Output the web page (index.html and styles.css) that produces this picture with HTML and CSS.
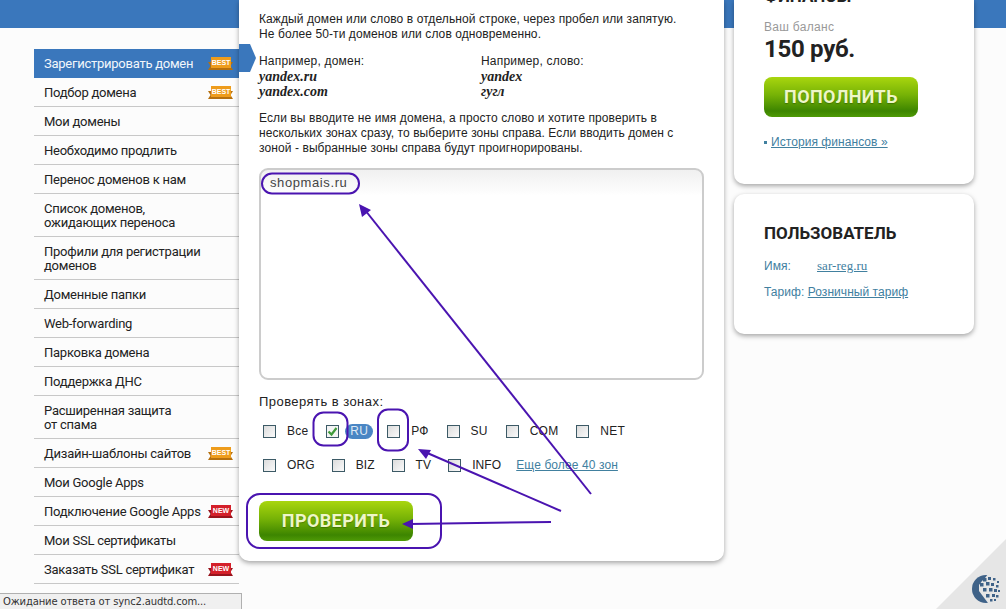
FILE: index.html
```html
<!DOCTYPE html>
<html>
<head>
<meta charset="utf-8">
<title>Регистрация доменов</title>
<link rel="stylesheet" href="styles.css">
</head>
<body>

<div class="page">
	<ul class="menu">
		<li class="active"><span>Зарегистрировать домен</span><b class="badge best">BEST</b></li>
		<li><span>Подбор домена</span><b class="badge best">BEST</b></li>
		<li><span>Мои домены</span></li>
		<li><span>Необходимо продлить</span></li>
		<li><span>Перенос доменов к нам</span></li>
		<li class="tall"><span>Список доменов,<br>ожидающих переноса</span></li>
		<li class="tall"><span>Профили для регистрации<br>доменов</span></li>
		<li><span>Доменные папки</span></li>
		<li><span>Web-forwarding</span></li>
		<li><span>Парковка домена</span></li>
		<li><span>Поддержка ДНС</span></li>
		<li class="tall"><span>Расширенная защита<br>от спама</span></li>
		<li><span>Дизайн-шаблоны сайтов</span><b class="badge best">BEST</b></li>
		<li><span>Мои Google Apps</span></li>
		<li><span>Подключение Google Apps</span><b class="badge new">NEW</b></li>
		<li><span>Мои SSL сертификаты</span></li>
		<li><span>Заказать SSL сертификат</span><b class="badge new">NEW</b></li>
	</ul>

	<div class="main">
		<p>Каждый домен или слово в отдельной строке, через пробел или запятую.<br>Не более 50-ти доменов или слов одновременно.</p>
		<div class="examples">
			<div>Например, домен:<em>yandex.ru</em><em>yandex.com</em></div>
			<div>Например, слово:<em>yandex</em><em>гугл</em></div>
		</div>
		<p>Если вы вводите не имя домена, а просто слово и хотите проверить в<br>нескольких зонах сразу, то выберите зоны справа. Если вводить домен с<br>зоной - выбранные зоны справа будут проигнорированы.</p>
		<div class="domains">shopmais.ru</div>
		<div class="zones-title">Проверять в зонах:</div>
		<div class="zones">
			<label><i class="cb"></i>Все</label>
			<label class="ru"><i class="cb checked"><svg width="11" height="11" viewBox="0 0 11 11"><path d="M1.5 5.5 L4.5 8.5 L9.5 2" fill="none" stroke="#3f9a3a" stroke-width="2.2"/></svg></i><span class="pill">RU</span></label>
			<label><i class="cb"></i>РФ</label>
			<label><i class="cb"></i>SU</label>
			<label><i class="cb"></i>COM</label>
			<label><i class="cb"></i>NET</label>
		</div>
		<div class="zones second">
			<label><i class="cb"></i>ORG</label>
			<label><i class="cb"></i>BIZ</label>
			<label><i class="cb"></i>TV</label>
			<label><i class="cb"></i>INFO</label>
			<a class="link more">Еще более 40 зон</a>
		</div>
		<div class="green-btn">ПРОВЕРИТЬ</div>
	</div>

	<div class="side">
		<div class="card finance">
			<h3>ФИНАНСЫ</h3>
			<div class="balance-label">Ваш баланс</div>
			<div class="balance">150 руб.</div>
			<div class="green-btn">ПОПОЛНИТЬ</div>
			<div class="history"><i class="bullet"></i><a class="link">История финансов »</a></div>
		</div>
		<div class="card user">
			<h3>ПОЛЬЗОВАТЕЛЬ</h3>
			<div class="user-row"><span class="user-key">Имя:</span><a class="link serif">sar-reg.ru</a></div>
			<div class="user-row tariff">Тариф: <a class="link">Розничный тариф</a></div>
		</div>
	</div>
</div>

<!-- пометки поверх скриншота -->
<svg class="marks" width="1006" height="609" viewBox="0 0 1006 609">
	<g fill="none" stroke="#4a14b0" stroke-width="2">
		<rect x="262" y="173.500" width="97" height="20" rx="10"/>
		<rect x="313.500" y="412.500" width="34" height="33" rx="10"/>
		<rect x="378" y="409.500" width="30" height="41" rx="10"/>
		<rect x="247" y="494" width="194" height="54" rx="13"/>
		<path d="M591 494 L365 210"/>
		<path d="M561 511 L425 452"/>
		<path d="M551 522 L410 524"/>
	</g>
	<g fill="#4a14b0">
		<path d="M359 204 L371 210 L362 217 Z"/>
		<path d="M418 449 L431 450 L426 459 Z"/>
		<path d="M402 524 L413 519 L413 529 Z"/>
	</g>
</svg>

<div class="corner">
	<svg width="70" height="70" viewBox="0 0 70 70">
		<path d="M70 0 L70 70 L0 70 Z" fill="#e6e6e6"/>
		<circle cx="50" cy="50" r="14" fill="#3f6288"/>
		<g fill="#e6e6e6">
			<path d="M52 35 h14 v29 h-14 l-3 -4 l-3 -4 l-3 -4 v-6 l3 -4 l3 -3 Z"/>
		</g>
		<g fill="#3f6288">
			<rect x="47" y="39" width="3.500" height="3.500"/><rect x="52" y="38" width="3" height="3"/><rect x="57" y="39" width="2.500" height="2.500"/><rect x="61" y="42" width="2" height="2"/>
			<rect x="44" y="44" width="3.500" height="3.500"/><rect x="50" y="43" width="3.500" height="3.500"/><rect x="55" y="44" width="3" height="3"/><rect x="60" y="46" width="2.500" height="2.500"/>
			<rect x="47" y="49" width="3.500" height="3.500"/><rect x="53" y="49" width="3.500" height="3.500"/><rect x="58" y="50" width="3" height="3"/><rect x="62" y="51" width="2" height="2"/>
			<rect x="50" y="55" width="3.500" height="3.500"/><rect x="56" y="55" width="3" height="3"/><rect x="60" y="56" width="2.500" height="2.500"/>
			<rect x="54" y="60" width="2.500" height="2.500"/><rect x="58" y="60" width="2" height="2"/>
		</g>
	</svg>
</div>

<div class="statusbar">Ожидание ответа от sync2.audtd.com...</div>

</body>
</html>
```

FILE: styles.css
```css
html, body {
	margin: 0;
	padding: 0;
	height: 609px;
	overflow: hidden;
}

body {
	position: relative;
	font-family: "Liberation Sans", Arial, sans-serif;
	font-size: 12px;
	color: #222;
}

.page {
	display: grid;
	grid-template-columns: 205px 485px 250px;
	height: 609px;
	padding-left: 34px;
	box-sizing: border-box;
	background: linear-gradient(#3a77bc 0, #3a77bc 28px, #fcfcfc 28px);
	align-items: start;
}

/* menu */
.menu {
	margin: 49px 0 0;
	padding: 0;
	list-style: none;
	font-family: Roboto, sans-serif;
	font-size: 13px;
	line-height: 14px;
	letter-spacing: -.25px;
	color: #222;
}

.menu li {
	position: relative;
	display: flex;
	justify-content: space-between;
	align-items: center;
	box-sizing: border-box;
	height: 29px;
	padding: 2px 8px 0 10px;
	border-bottom: 1px solid #c8c8c8;
}

.menu li.tall {
	height: 43px;
}

.menu li.active {
	background: #3a77bc;
	color: #f2f6fb;
	border-bottom-color: #3a77bc;
}

.menu li.active::after {
	content: "";
	position: absolute;
	left: 205px;
	top: -5px;
	width: 17px;
	height: 28px;
	background: #3a77bc;
	clip-path: polygon(0 0, 11px 0, 100% 50%, 11px 100%, 0 100%);
	z-index: 2;
}

/* ribbon: band over two darker tails */
.badge {
	position: relative;
	isolation: isolate;
	width: 20px;
	height: 11px;
	margin: -3px 0 0;
	font-family: "Liberation Sans", sans-serif;
	font-size: 7px;
	line-height: 11px;
	font-weight: bold;
	text-align: center;
	color: #fff;
	letter-spacing: 0;
}

.badge::before {
	content: "";
	position: absolute;
	left: -3px;
	right: -2px;
	top: 5px;
	height: 8px;
	z-index: -2;
	clip-path: polygon(0 0, 100% 0, 90% 50%, 100% 100%, 0 100%, 10% 50%);
}

.badge::after {
	content: "";
	position: absolute;
	left: 0;
	right: 0;
	top: 0;
	bottom: 0;
	z-index: -1;
}

.best::before { background: #b5700f; }
.best::after { background: #ee9c1c; }
.new::before { background: #98141c; }
.new::after { background: #d4202a; }

/* main */
.main {
	position: relative;
	z-index: 1;
	box-sizing: border-box;
	height: 561px;
	padding: 12px 20px 0;
	background: #fff;
	border-radius: 0 0 10px 10px;
	box-shadow: 0 2px 5px rgba(0, 0, 0, .35);
	line-height: 15px;
	letter-spacing: .09px;
}

.main p {
	margin: 0;
}

.examples {
	display: grid;
	grid-template-columns: 222px 1fr;
	margin: 12px 0;
	letter-spacing: .2px;
}

.examples em {
	display: block;
	font-family: "Liberation Serif", serif;
	font-weight: bold;
	font-size: 14px;
	letter-spacing: 0;
}

.domains {
	box-sizing: border-box;
	height: 212px;
	margin-top: 12px;
	padding: 5px 9px;
	border: 2px solid #ccc;
	border-radius: 9px;
	background: linear-gradient(#f0f0f0, #fff 26px);
	font-size: 13px;
	letter-spacing: .6px;
	color: #444;
}

.zones-title {
	margin-top: 14px;
	font-size: 13px;
	letter-spacing: .45px;
}

.zones {
	display: flex;
	align-items: center;
	column-gap: 18px;
	height: 20px;
	margin: 12px 0 0 4px;
	letter-spacing: .22px;
}

.zones.second {
	column-gap: 17px;
	margin-top: 14px;
	letter-spacing: .1px;
}

.zones .more {
	margin-left: -2px;
}

.zones label {
	display: flex;
	align-items: center;
}

.zones .ru {
	margin-right: -4px;
}

.cb {
	display: block;
	box-sizing: border-box;
	width: 13px;
	height: 13px;
	margin-right: 11px;
	border: 1px solid #3c5a66;
	background: linear-gradient(135deg, #dcdcdc, #fafafa);
}

.cb.checked {
	margin-right: 6px;
	background: #f4f4f4;
}

.cb svg {
	display: block;
}

.pill {
	padding: 0 5px;
	border-radius: 9px;
	background: #4a86c4;
	color: #dfe9f4;
}

.link {
	color: #41809f;
	text-decoration: underline;
}

.green-btn {
	width: 154px;
	height: 40px;
	border-radius: 8px;
	background: linear-gradient(#a9d60e 0, #76b206 45%, #3d8500 85%, #4f9a06 100%);
	font-family: Roboto, sans-serif;
	font-size: 18px;
	font-weight: bold;
	line-height: 40px;
	text-align: center;
	letter-spacing: .4px;
	color: #eef6c8;
	text-shadow: 0 1px 1px rgba(40, 80, 0, .5);
}

.main .green-btn {
	margin-top: 26px;
}

/* right column */
.side {
	margin-left: 10px;
	display: flex;
	flex-direction: column;
	gap: 10px;
}

.card {
	position: relative;
	box-sizing: border-box;
	padding: 0 30px;
	background: #fff;
	border-radius: 0 0 10px 10px;
	box-shadow: 0 2px 5px rgba(0, 0, 0, .35);
}

.card h3 {
	margin: 0;
	font-family: Roboto, sans-serif;
	font-size: 17px;
	line-height: 20px;
	color: #222;
}

.finance {
	height: 184px;
}

.finance h3 {
	margin-top: -14px;
}

.balance-label {
	margin-top: 14px;
	color: #999;
	line-height: 15px;
	letter-spacing: .3px;
}

.balance {
	font-family: Roboto, sans-serif;
	font-size: 24px;
	font-weight: bold;
	line-height: 28px;
	letter-spacing: -.3px;
}

.finance .green-btn {
	margin-top: 14px;
}

.history {
	display: flex;
	align-items: center;
	margin-top: 18px;
	line-height: 15px;
	letter-spacing: .06px;
}

.bullet {
	width: 3px;
	height: 3px;
	margin-right: 4px;
	background: #41809f;
}

.user {
	height: 140px;
	padding-top: 29px;
	border-radius: 10px;
}

.user-row {
	margin-top: 15px;
	line-height: 15px;
	color: #41809f;
	letter-spacing: .05px;
}

.user-row.tariff {
	margin-top: 11px;
}

.user-key {
	display: inline-block;
	width: 53px;
}

.serif {
	font-family: "Liberation Serif", serif;
	font-size: 13px;
}

/* overlays */
.marks {
	position: absolute;
	left: 0;
	top: 0;
	z-index: 5;
	pointer-events: none;
}

.corner {
	position: absolute;
	right: 0;
	bottom: 0;
	width: 70px;
	height: 70px;
	z-index: 4;
}

.corner svg {
	display: block;
}

.statusbar {
	position: absolute;
	left: 0;
	bottom: 0;
	z-index: 6;
	box-sizing: border-box;
	width: 242px;
	height: 16px;
	padding-left: 3px;
	background: #f0f0f0;
	border-top: 1px solid #b0b0b0;
	border-right: 1px solid #b0b0b0;
	font-family: "DejaVu Sans", sans-serif;
	font-size: 10px;
	line-height: 16px;
	letter-spacing: -.15px;
	color: #333;
}
```
